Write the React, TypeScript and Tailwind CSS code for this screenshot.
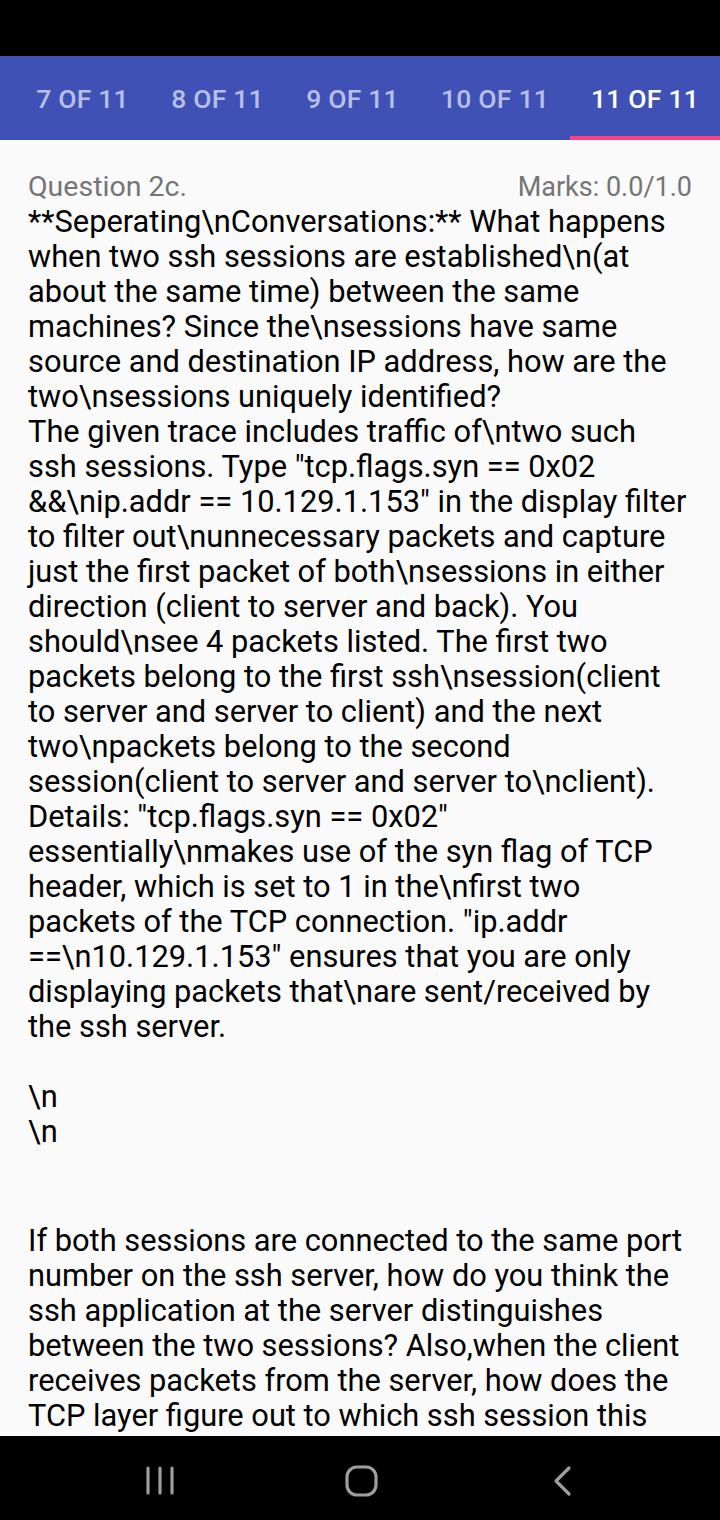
import React from "react";

const lines1 = [
  "**Seperating\\nConversations:** What happens",
  "when two ssh sessions are established\\n(at",
  "about the same time) between the same",
  "machines? Since the\\nsessions have same",
  "source and destination IP address, how are the",
  "two\\nsessions uniquely identified?",
  "The given trace includes traffic of\\ntwo such",
  "ssh sessions. Type \"tcp.flags.syn == 0x02",
  "&&\\nip.addr == 10.129.1.153\" in the display filter",
  "to filter out\\nunnecessary packets and capture",
  "just the first packet of both\\nsessions in either",
  "direction (client to server and back). You",
  "should\\nsee 4 packets listed. The first two",
  "packets belong to the first ssh\\nsession(client",
  "to server and server to client) and the next",
  "two\\npackets belong to the second",
  "session(client to server and server to\\nclient).",
  "Details: \"tcp.flags.syn == 0x02\"",
  "essentially\\nmakes use of the syn flag of TCP",
  "header, which is set to 1 in the\\nfirst two",
  "packets of the TCP connection. \"ip.addr",
  "==\\n10.129.1.153\" ensures that you are only",
  "displaying packets that\\nare sent/received by",
  "the ssh server.",
  "\u00a0",
  "\\n",
  "\\n",
  "\u00a0",
  "\u00a0",
];

const lines2 = [
  "If both sessions are connected to the same port",
  "number on the ssh server, how do you think the",
  "ssh application at the server distinguishes",
  "between the two sessions? Also,when the client",
  "receives packets from the server, how does the",
  "TCP layer figure out to which ssh session this",
];

const tabs = [
  { label: "7 OF 11", w: "w-[135px]" },
  { label: "8 OF 11", w: "w-[135px]" },
  { label: "9 OF 11", w: "w-[135px]" },
  { label: "10 OF 11", w: "w-[150px]" },
  { label: "11 OF 11", w: "w-[150px]", active: true },
];

export default function App() {
  return (
    <div className="w-[720px] h-[1520px] flex flex-col bg-[#fafafa] overflow-hidden" style={{ fontFamily: "Roboto, 'Noto Sans', sans-serif" }}>
      <div className="h-[56px] bg-black shrink-0" />
      <div className="h-[84px] bg-[#3f51b5] shrink-0 flex pl-[15px]">
        {tabs.map((t) => (
          <div key={t.label} className={`${t.w} shrink-0 flex flex-col`}>
            <div className={`flex-1 flex items-center justify-center pt-[6px] text-[26.5px] font-medium tracking-[0.2px] ${t.active ? "text-white" : "text-[#b7bfe6]"}`}>
              {t.label}
            </div>
            <div className={`h-[4px] ${t.active ? "bg-[#ff4081]" : ""}`} />
          </div>
        ))}
      </div>
      <div className="flex-1 overflow-hidden px-[28px] pt-[29px] text-[30.8px] leading-[35px] text-black">
        <div className="h-[35px] flex justify-between items-baseline text-[#757575]">
          <span className="text-[28.5px]">Question 2c.</span>
          <span className="text-[27px]">Marks: 0.0/1.0</span>
        </div>
        <div className="whitespace-nowrap">
          {lines1.map((l, i) => (
            <div key={i}>{l}</div>
          ))}
        </div>
        <div className="whitespace-nowrap mt-[4px]">
          {lines2.map((l, i) => (
            <div key={i}>{l}</div>
          ))}
        </div>
      </div>
      <div className="h-[84px] bg-black shrink-0 flex items-center">
        <div className="relative w-full h-full">
          <svg className="absolute left-[144px] top-[30px]" width="32" height="30" viewBox="0 0 32 30">
            <g stroke="#9e9e9e" strokeWidth="3.2" strokeLinecap="round">
              <line x1="4" y1="2" x2="4" y2="27" />
              <line x1="16" y1="2" x2="16" y2="27" />
              <line x1="28" y1="2" x2="28" y2="27" />
            </g>
          </svg>
          <svg className="absolute left-[344px] top-[29px]" width="35" height="33" viewBox="0 0 35 33">
            <rect x="3" y="2" width="29" height="28" rx="10" fill="none" stroke="#9e9e9e" strokeWidth="3.2" />
          </svg>
          <svg className="absolute left-[551px] top-[29px]" width="24" height="32" viewBox="0 0 24 32">
            <polyline points="18,3 5,16 18,29" fill="none" stroke="#9e9e9e" strokeWidth="3.2" strokeLinecap="round" strokeLinejoin="round" />
          </svg>
        </div>
      </div>
    </div>
  );
}
